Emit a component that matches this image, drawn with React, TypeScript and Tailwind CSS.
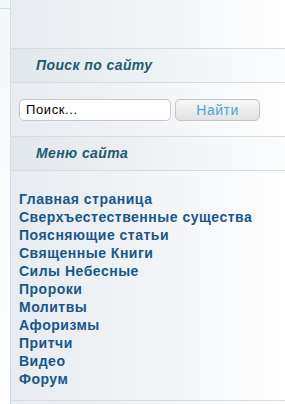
import React from 'react';

const MENU = [
  'Главная страница',
  'Сверхъестественные существа',
  'Поясняющие статьи',
  'Священные Книги',
  'Силы Небесные',
  'Пророки',
  'Молитвы',
  'Афоризмы',
  'Притчи',
  'Видео',
  'Форум',
];

const BlockTitle: React.FC<{ title: string }> = ({ title }) => (
  <div className="h-[35px] border-y border-[#d5dde4] bg-gradient-to-r from-[#e2e7eb] via-[#eef1f4] to-[#fbfcfd] pl-[25px] flex items-center">
    <span className="text-[14px] font-bold italic text-[#1d5b6c] tracking-[0.4px]">{title}</span>
  </div>
);

export default function App() {
  return (
    <div className="w-[285px] h-[404px] flex bg-white font-['Liberation_Sans',Arial,sans-serif] overflow-hidden">
      <div className="w-[10px] shrink-0 bg-gradient-to-b from-[#f2f7fa] to-white">
        <div className="mt-[8px] h-px bg-[#d3dde6]" />
      </div>
      <div className="flex-1 border-l border-[#d3dbe4] bg-gradient-to-r from-[#e8ecf0] via-[#f1f3f6] to-white">
        <div className="h-[48px]" />
        <BlockTitle title="Поиск по сайту" />
        <div className="h-[53px] flex items-center pl-[8px] gap-[4px]">
          <input
            readOnly
            value="Поиск..."
            className="w-[152px] h-[22px] rounded-[5px] border border-[#c4c8cc] bg-white px-[6px] text-[13px] tracking-[0.6px] text-black outline-none"
          />
          <button className="w-[85px] h-[22px] rounded-[5px] border border-[#c2c6ca] bg-gradient-to-b from-[#f7f7f7] to-[#e3e3e3] text-[14px] tracking-[0.5px] text-[#4fa5cb]">
            Найти
          </button>
        </div>
        <BlockTitle title="Меню сайта" />
        <ul className="pt-[19px] pl-[8px] h-[230px] border-b border-[#d5dde4]">
          {MENU.map(m => (
            <li key={m} className="h-[18px] leading-[18px] text-[14px] font-bold text-[#17578a] tracking-[0.5px]">
              {m}
            </li>
          ))}
        </ul>
      </div>
    </div>
  );
}
